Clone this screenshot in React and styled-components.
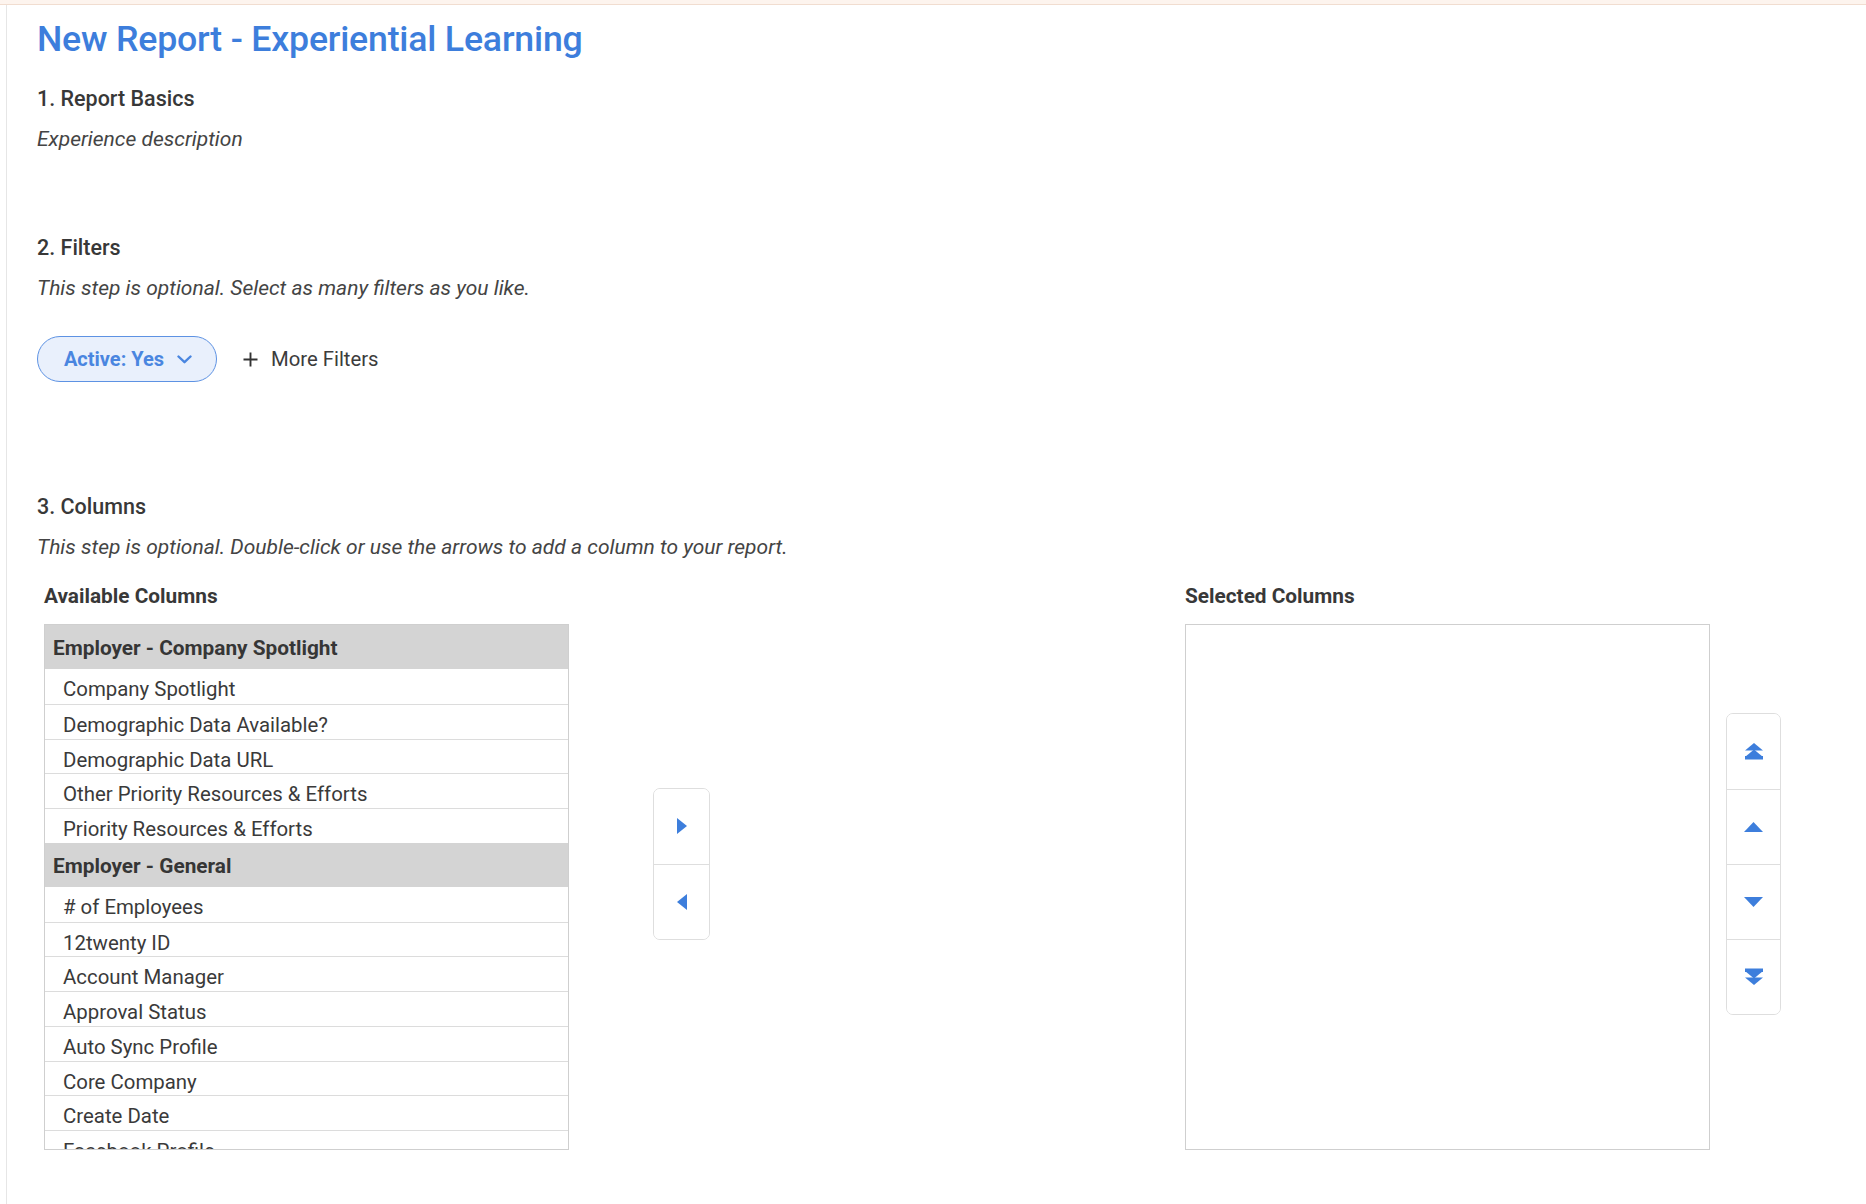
import React from "react";
import styled, { createGlobalStyle } from "styled-components";

const GlobalStyle = createGlobalStyle`
  html, body {
    margin: 0;
    padding: 0;
    background: #ffffff;
  }
  body {
    font-family: Roboto, "Liberation Sans", sans-serif;
    color: #3a3a3a;
  }
  * { box-sizing: border-box; }
`;

const TopBand = styled.div`
  height: 5px;
  background: #fdf4ee;
  border-bottom: 1px solid #f1ddd0;
`;

const Main = styled.main`
  margin-left: 6px;
  border-left: 1px solid #e6e6e6;
  min-height: 1199px;
  padding: 12px 0 0 30px;
`;

const Title = styled.h1`
  margin: 0;
  font-size: 35.7px;
  line-height: 44px;
  font-weight: 500;
  color: #3d7edc;
  letter-spacing: -0.2px;
`;

const Section = styled.section`
  margin-top: ${(p) => p.$top}px;
`;

const SectionTitle = styled.h2`
  margin: 0;
  font-size: 21.5px;
  line-height: 28px;
  font-weight: 500;
  color: #383838;
`;

const Hint = styled.p`
  margin: 13px 0 0;
  font-size: 21px;
  line-height: 26px;
  font-style: italic;
  color: #444444;
`;

const FilterBar = styled.div`
  margin-top: 35px;
  display: flex;
  align-items: center;
  gap: 26px;
`;

const Pill = styled.button`
  height: 46px;
  width: 180px;
  border-radius: 23px;
  border: 1px solid #5d92e3;
  background: #e9f0fc;
  color: #4a86e0;
  font-family: inherit;
  font-size: 20px;
  font-weight: 700;
  display: flex;
  align-items: center;
  justify-content: center;
  gap: 13px;
  padding: 0 0 0 2px;
`;

const TextButton = styled.button`
  border: none;
  background: none;
  padding: 0;
  font-family: inherit;
  font-size: 20.3px;
  color: #3c3c3c;
  display: flex;
  align-items: center;
  gap: 13px;
`;

const ColumnsRow = styled.div`
  margin-top: 24px;
  padding-left: 7px;
  display: flex;
`;

const Group = styled.div`
  display: flex;
  align-items: center;
  margin-left: ${(p) => p.$offset || 0}px;
`;

const Panel = styled.div`
  width: 525px;
`;

const PanelLabel = styled.div`
  font-size: 20.8px;
  line-height: 24px;
  font-weight: 700;
  color: #383838;
  margin-bottom: 16px;
`;

const ListBox = styled.div`
  height: 526px;
  border: 1px solid #cfcfcf;
  overflow-y: auto;
  background: #fff;
  scrollbar-width: none;
  &::-webkit-scrollbar { display: none; }
`;

const GroupHeader = styled.div`
  height: 44px;
  background: #d4d4d4;
  font-size: 20.8px;
  font-weight: 700;
  color: #363636;
  display: flex;
  align-items: center;
  padding: 2px 8px 0;
  white-space: nowrap;
`;

const Item = styled.div`
  height: 34.75px;
  border-top: ${(p) => (p.$first ? "none" : "1px solid #dcdcdc")};
  font-size: 20.4px;
  color: #3a3a3a;
  padding: 7px 0 0 18px;
  line-height: 26px;
  white-space: nowrap;
`;

const ButtonStack = styled.div`
  display: flex;
  flex-direction: column;
  width: ${(p) => p.$w}px;
  margin-left: ${(p) => p.$gap}px;
  margin-bottom: 7px;
  border: 1px solid #dedede;
  border-radius: 7px;
  overflow: hidden;
  background: #fff;
`;

const StackButton = styled.button`
  height: 75px;
  border: none;
  border-top: 1px solid #dedede;
  &:first-child { border-top: none; }
  background: #fff;
  display: flex;
  align-items: center;
  justify-content: center;
  padding: 0;
  color: #3d7edc;
`;

const Chevron = () => (
  <svg width="15" height="9" viewBox="0 0 15 9" fill="none">
    <path d="M1.5 1.5 L7.5 7.2 L13.5 1.5" stroke="#4a86e0" strokeWidth="2.4" strokeLinecap="round" strokeLinejoin="round" />
  </svg>
);

const Plus = () => (
  <svg width="15" height="15" viewBox="0 0 15 15">
    <path d="M7.5 0.5 V14.5 M0.5 7.5 H14.5" stroke="#333" strokeWidth="1.9" />
  </svg>
);

const Caret = ({ dir }) => {
  const pts = {
    right: "0,0 10,8 0,16",
    left: "10,0 0,8 10,16",
  }[dir];
  return (
    <svg width="10" height="16" viewBox="0 0 10 16">
      <polygon points={pts} fill="currentColor" />
    </svg>
  );
};

const VCaret = ({ dir, double }) => {
  const up = dir === "up";
  if (double) {
    return (
      <svg width="18" height="17" viewBox="0 0 18 17">
        {up ? (
          <>
            <polygon points="9,0 18,7.5 0,7.5" fill="currentColor" />
            <polygon points="9,6.5 18,14 0,14" fill="currentColor" />
            <rect x="0" y="13" width="18" height="3.5" fill="currentColor" />
          </>
        ) : (
          <>
            <rect x="0" y="0.5" width="18" height="3.5" fill="currentColor" />
            <polygon points="0,3 18,3 9,10.5" fill="currentColor" />
            <polygon points="0,9.5 18,9.5 9,17" fill="currentColor" />
          </>
        )}
      </svg>
    );
  }
  return (
    <svg width="19" height="10" viewBox="0 0 19 10">
      <polygon points={up ? "9.5,0 19,10 0,10" : "0,0 19,0 9.5,10"} fill="currentColor" />
    </svg>
  );
};

const groups = [
  {
    name: "Employer - Company Spotlight",
    items: [
      "Company Spotlight",
      "Demographic Data Available?",
      "Demographic Data URL",
      "Other Priority Resources & Efforts",
      "Priority Resources & Efforts",
    ],
  },
  {
    name: "Employer - General",
    items: [
      "# of Employees",
      "12twenty ID",
      "Account Manager",
      "Approval Status",
      "Auto Sync Profile",
      "Core Company",
      "Create Date",
      "Facebook Profile",
      "Industry",
      "LinkedIn Profile",
      "Name",
    ],
  },
];

export default function App() {
  return (
    <>
      <GlobalStyle />
      <TopBand />
      <Main>
        <Title>New Report - Experiential Learning</Title>

        <Section $top={24}>
          <SectionTitle>1. Report Basics</SectionTitle>
          <Hint>Experience description</Hint>
        </Section>

        <Section $top={82}>
          <SectionTitle>2. Filters</SectionTitle>
          <Hint>This step is optional. Select as many filters as you like.</Hint>
          <FilterBar>
            <Pill>
              Active: Yes <Chevron />
            </Pill>
            <TextButton>
              <Plus /> More Filters
            </TextButton>
          </FilterBar>
        </Section>

        <Section $top={111}>
          <SectionTitle>3. Columns</SectionTitle>
          <Hint>
            This step is optional. Double-click or use the arrows to add a column to your report.
          </Hint>
          <ColumnsRow>
            <Group>
              <Panel>
                <PanelLabel>Available Columns</PanelLabel>
                <ListBox>
                  {groups.map((g) => (
                    <React.Fragment key={g.name}>
                      <GroupHeader>{g.name}</GroupHeader>
                      {g.items.map((it, i) => (
                        <Item key={it} $first={i === 0}>
                          {it}
                        </Item>
                      ))}
                    </React.Fragment>
                  ))}
                </ListBox>
              </Panel>
              <ButtonStack $w={57} $gap={84}>
                <StackButton aria-label="Add">
                  <Caret dir="right" />
                </StackButton>
                <StackButton aria-label="Remove">
                  <Caret dir="left" />
                </StackButton>
              </ButtonStack>
            </Group>
            <Group $offset={475}>
              <Panel>
                <PanelLabel>Selected Columns</PanelLabel>
                <ListBox />
              </Panel>
              <ButtonStack $w={55} $gap={16}>
                <StackButton aria-label="Move to top">
                  <VCaret dir="up" double />
                </StackButton>
                <StackButton aria-label="Move up">
                  <VCaret dir="up" />
                </StackButton>
                <StackButton aria-label="Move down">
                  <VCaret dir="down" />
                </StackButton>
                <StackButton aria-label="Move to bottom">
                  <VCaret dir="down" double />
                </StackButton>
              </ButtonStack>
            </Group>
          </ColumnsRow>
        </Section>
      </Main>
    </>
  );
}
